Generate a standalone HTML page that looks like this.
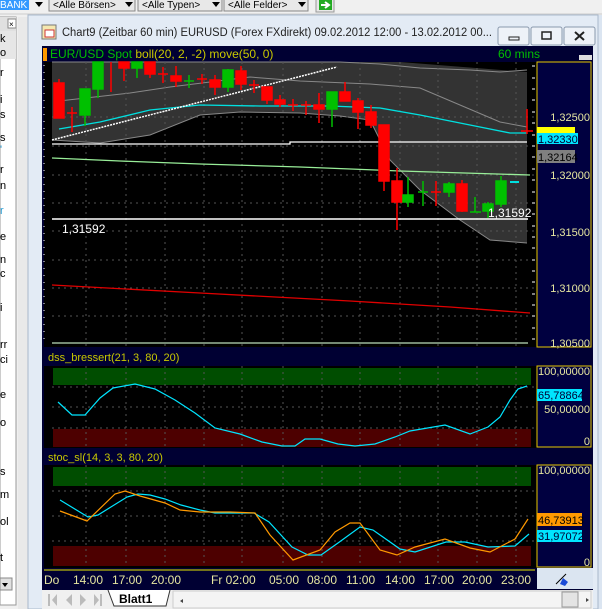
<!DOCTYPE html>
<html><head><meta charset="utf-8"><style>
html,body{margin:0;padding:0;width:602px;height:609px;overflow:hidden;background:#f0f0f0;font-family:"Liberation Sans",sans-serif}
svg{display:block}
text{font-family:"Liberation Sans",sans-serif}
</style></head><body>
<svg width="602" height="609" viewBox="0 0 602 609" xmlns="http://www.w3.org/2000/svg">
<rect x="0" y="0" width="602" height="15" fill="#f0f0f0"/>
<rect x="0" y="0" width="29" height="10" fill="#3399ff"/>
<text x="0" y="8" font-size="10" fill="#fff">BANK</text>
<path d="M35 2 L43 2 L39 7 Z" fill="#000"/>
<g font-size="10" fill="#000">
<rect x="49" y="-2" width="86" height="13" fill="#e8e8e8" stroke="#888"/><text x="53" y="8">&lt;Alle Börsen&gt;</text><path d="M125 2 L133 2 L129 7Z"/>
<rect x="138" y="-2" width="84" height="13" fill="#e8e8e8" stroke="#888"/><text x="142" y="8">&lt;Alle Typen&gt;</text><path d="M212 2 L220 2 L216 7Z"/>
<rect x="224" y="-2" width="84" height="13" fill="#e8e8e8" stroke="#888"/><text x="228" y="8">&lt;Alle Felder&gt;</text><path d="M298 2 L306 2 L302 7Z"/>
</g>
<rect x="316" y="-1" width="18" height="13" fill="#e8e8e8" stroke="#999"/>
<rect x="319" y="0" width="13" height="10" fill="#22aa22"/>
<path d="M321 5 H328 M325 2 L329 5 L325 8" stroke="#fff" stroke-width="2" fill="none"/>
<line x1="0" y1="14" x2="602" y2="14" stroke="#ccc"/>

<rect x="0" y="17" width="16" height="588" fill="#fff" stroke="#999"/>
<rect x="0" y="17" width="16" height="14" fill="#e0e0e0"/>
<rect x="8" y="19" width="8" height="9" fill="#fff" stroke="#888"/>
<text x="9" y="27" font-size="8">×</text>
<rect x="0" y="31" width="16" height="14" fill="#e6e6e6"/><text x="0" y="42" font-size="11">k</text>
<rect x="0" y="45" width="16" height="14" fill="#e6e6e6"/><text x="0" y="56" font-size="11">o</text>
<g font-size="11" fill="#000">
<text x="0" y="76">r</text><text x="0" y="103">i</text><text x="0" y="118">s</text><text x="0" y="141">s</text>
<text x="0" y="153" fill="#2a9fd6">'</text><text x="0" y="173">r</text><text x="0" y="189">n</text>
<text x="0" y="214" fill="#2a9fd6">r</text><text x="0" y="240">e</text><text x="0" y="263">n</text><text x="0" y="277">c</text>
<text x="0" y="311">i</text><text x="0" y="348">rr</text><text x="0" y="363">ci</text><text x="0" y="398">e</text><text x="0" y="426">o</text>
<text x="0" y="475">s</text><text x="0" y="498">m</text><text x="0" y="525">ol</text><text x="0" y="561">t</text>
</g>
<rect x="0" y="578" width="12" height="12" fill="#e0e0e0" stroke="#888"/><path d="M2 583 L8 583 L5 587Z" fill="#000"/>
<rect x="18" y="17" width="10" height="592" fill="#e9e9e9"/>
<rect x="28" y="15" width="574" height="594" fill="#dbe5f1"/>
<rect x="28" y="15" width="570" height="594" fill="#e3ebf5" stroke="#a9b8cc"/>
<rect x="42" y="25" width="14" height="14" fill="#f4e8b0" stroke="#777"/>
<rect x="45" y="30" width="9" height="7" fill="#fff" stroke="#c33"/>
<text x="62" y="36" font-size="11.5" fill="#222" textLength="430" lengthAdjust="spacingAndGlyphs">Chart9 (Zeitbar 60 min)  EURUSD (Forex FXdirekt) 09.02.2012 12:00 - 13.02.2012 00...</text>
<g fill="#eef2f8" stroke="#8a99ad">
<rect x="498" y="27" width="31" height="18" rx="2"/><rect x="531" y="27" width="31" height="18" rx="2"/><rect x="564" y="27" width="31" height="18" rx="2"/>
</g>
<rect x="509" y="37" width="10" height="3" fill="none" stroke="#222"/>
<rect x="542" y="32" width="9" height="7" fill="none" stroke="#222" stroke-width="1.5"/>
<path d="M575 32 L584 40 M584 32 L575 40" stroke="#222" stroke-width="2"/>

<rect x="42" y="46" width="551" height="544" fill="#000033"/>
<rect x="43" y="48" width="4" height="13" fill="#ff9900"/>
<text x="50" y="58" font-size="12" fill="#00c000">EUR/USD Spot <tspan fill="#c8c800">boll(20, 2, -2) move(50, 0)</tspan></text>
<text x="498" y="58" font-size="12" fill="#00c000">60 mins</text>
<rect x="579" y="55" width="13" height="5" fill="#ddd"/>

<rect x="44" y="62" width="493" height="285" fill="#000"/>
<path d="M52 62 L337 62 L400 62 L527 72 L527 243 L490 240 L460 220 L420 190 L390 160 L370 120 L340 116 L300 113 L240 112 L200 115 L150 135 L100 143 L52 140 Z" fill="#333333"/>
<polyline points="52,62 340,62 380,64 420,68 470,70 500,72 527,70" fill="none" stroke="#888"/>
<polyline points="59,101 130,93 170,87 250,77 300,81 370,84 420,88 460,105 500,122 527,127" fill="none" stroke="#888"/>
<polyline points="52,140 100,143 150,135 200,115 240,112 300,113 340,116 370,120 390,160 420,190 460,220 490,240 527,243" fill="none" stroke="#888"/>
<g stroke="#555" stroke-dasharray="2,4" fill="none">
<path d="M86 62V347M126 62V347M165 62V347M204 62V347M242 62V347M283 62V347M322 62V347M360 62V347M400 62V347M438 62V347M477 62V347M516 62V347"/>
<path d="M52 117H537M52 146H537M52 175H537M52 203H537M52 231H537M52 260H537M52 288H537M52 316H537"/>
</g>
<g stroke="#fff"><path d="M44 65v1M44 72v1M44 79v1M44 86v1M44 93v1M44 100v1M44 107v1M44 114v1M44 121v1M44 128v1M44 135v1M44 142v1M44 149v1M44 156v1M44 163v1M44 170v1M44 177v1M44 184v1M44 191v1M44 198v1M44 205v1M44 212v1M44 219v1M44 226v1M44 233v1M44 240v1M44 247v1M44 254v1M44 261v1M44 268v1M44 275v1M44 282v1M44 289v1M44 296v1M44 303v1M44 310v1M44 317v1M44 324v1M44 331v1M44 338v1" stroke-width="1"/></g>
<polyline points="59,129 100,122 150,110 200,105 260,106 330,106 380,108 420,115 470,125 510,133 527,133" fill="none" stroke="#00e0e0" stroke-width="1.3"/>
<path d="M52 144 H290 V142 H527" stroke="#fff" fill="none" stroke-width="1.3"/>
<path d="M52 140 L337 67" stroke="#fff" stroke-width="1.5" stroke-dasharray="2,1"/>
<path d="M52 158 L120 161 L200 164 L300 167 L400 171 L530 175" stroke="#99ee99" fill="none" stroke-width="1.3"/>
<path d="M52 219 H528" stroke="#fff" stroke-width="1.5"/>
<path d="M52 285 L200 293 L350 301 L450 307 L530 313" stroke="#e00000" fill="none" stroke-width="1.3"/>
<path d="M52 343 H528" stroke="#bbddbb" stroke-width="1.3"/>
<g stroke-width="1.5">
<g stroke="#ff0000" fill="#ff0000">
<path d="M59 79V118"/><rect x="54" y="83" width="10" height="35"/>
<path d="M72 107V132M67 113H77"/>
<path d="M111 62V92"/>
<path d="M124 62V81"/><rect x="119" y="62" width="10" height="6"/>
<path d="M150 62V78"/><rect x="145" y="62" width="10" height="12"/>
<path d="M163 67V83M158 74H168"/>
<path d="M176 66V87"/><rect x="171" y="76" width="10" height="5"/>
<path d="M202 74V84M197 79H207"/>
<path d="M215 75V95"/><rect x="210" y="80" width="10" height="7"/>
<path d="M241 66V90"/><rect x="236" y="71" width="10" height="13"/>
<path d="M254 80V93M249 85H259"/>
<path d="M267 87V104"/><rect x="262" y="87" width="10" height="13"/>
<path d="M280 95V107"/><rect x="275" y="100" width="10" height="4"/>
<path d="M293 99V111M288 105H298"/>
<path d="M306 101V115M301 105H311"/>
<path d="M319 93V123"/><rect x="314" y="105" width="10" height="4"/>
<path d="M345 82V101"/><rect x="340" y="92" width="10" height="9"/>
<path d="M358 98V129"/><rect x="353" y="101" width="10" height="11"/>
<path d="M371 105V128"/><rect x="366" y="112" width="10" height="13"/>
<path d="M384 125V191"/><rect x="379" y="125" width="10" height="56"/>
<path d="M397 168V230"/><rect x="392" y="181" width="10" height="21"/>
<path d="M436 181V206M431 192H441"/>
<path d="M462 180V212"/><rect x="457" y="184" width="10" height="27"/>
<path d="M527 109V134M521 131H533"/>
</g>
<g stroke="#00c000" fill="#00c000">
<path d="M85 89V126"/><rect x="80" y="89" width="10" height="26"/>
<path d="M98 62V98"/><rect x="93" y="62" width="10" height="27"/>
<path d="M137 62V78"/><rect x="132" y="62" width="10" height="6"/>
<path d="M189 75V88M184 81H194"/>
<path d="M228 69V92"/><rect x="223" y="70" width="10" height="17"/>
<path d="M332 92V127"/><rect x="327" y="92" width="10" height="17"/>
<path d="M408 177V207"/><rect x="403" y="195" width="10" height="7"/>
<path d="M423 181V206M418 192H428"/>
<path d="M449 182V197"/><rect x="444" y="184" width="10" height="8"/>
<path d="M475 197V212M470 212H481"/>
<path d="M488 202V218"/><rect x="483" y="204" width="10" height="7"/>
<path d="M501 176V207"/><rect x="496" y="181" width="10" height="23"/>
</g>
<path d="M510 182H519" stroke="#00e0e0" stroke-width="2"/>
</g>
<text x="62" y="233" font-size="12" fill="#fff">1,31592</text>
<text x="488" y="217" font-size="12" fill="#fff">1,31592</text>
<rect x="537" y="62" width="54" height="285" fill="#000040" stroke="#e6c800"/>
<g stroke="#fff"><path d="M532 66h3M532 78h3M532 89h3M532 100h3M532 112h3M532 123h3M532 135h3M532 146h3M532 157h3M532 169h3M532 180h3M532 192h3M532 203h3M532 214h3M532 226h3M532 237h3M532 248h3M532 260h3M532 271h3M532 282h3M532 294h3M532 305h3M532 316h3M532 328h3M532 339h3"/></g>
<g font-size="11" fill="#e6e6a0" text-anchor="end">
<text x="590" y="121">1,32500</text><text x="590" y="179">1,32000</text><text x="590" y="236">1,31500</text><text x="590" y="292">1,31000</text><text x="590" y="347">1,30500</text>
</g>
<rect x="537" y="127" width="38" height="7" fill="#ffff00"/>
<rect x="537" y="133" width="41" height="11" fill="#00e5ff"/>
<text x="538" y="143" font-size="11" fill="#000033">1,32330</text>
<rect x="537" y="150" width="38" height="13" fill="#808080"/>
<text x="538" y="161" font-size="11" fill="#000">1,32164</text>

<text x="48" y="361" font-size="11" fill="#c8c800">dss_bressert(21, 3, 80, 20)</text>
<rect x="44" y="366" width="493" height="82" fill="#000"/>
<rect x="53" y="368" width="478" height="17" fill="#004d00"/>
<rect x="53" y="429" width="478" height="18" fill="#4d0000"/>
<g stroke="#555" stroke-dasharray="2,4"><path d="M86 366V448M126 366V448M165 366V448M204 366V448M242 366V448M283 366V448M322 366V448M360 366V448M400 366V448M438 366V448M477 366V448M516 366V448M52 387H537M52 407H537M52 428H537"/></g>
<polyline points="58,402 72,415 85,415 100,398 113,388 135,384 155,389 175,400 195,413 215,428 240,434 262,442 282,446 295,446 305,439 320,439 338,444 355,446 375,444 395,437 410,431 445,425 470,434 488,427 500,417 510,400 518,389 527,386" fill="none" stroke="#00e5ff" stroke-width="1.2"/>
<rect x="537" y="366" width="54" height="81" fill="#000040" stroke="#e6c800"/>
<g font-size="11" fill="#e6e6a0" text-anchor="end"><text x="590" y="375">100,00000</text><text x="590" y="413">50,00000</text><text x="590" y="445">0</text></g>
<rect x="537" y="389" width="45" height="12" fill="#00e5ff"/>
<text x="538" y="399" font-size="11" fill="#000033">65,78864</text>

<text x="48" y="461" font-size="11" fill="#c8c800">stoc_sl(14, 3, 3, 80, 20)</text>
<rect x="44" y="465" width="493" height="103" fill="#000"/>
<rect x="53" y="467" width="478" height="19" fill="#004d00"/>
<rect x="53" y="546" width="478" height="20" fill="#4d0000"/>
<g stroke="#555" stroke-dasharray="2,4"><path d="M86 465V566M126 465V566M165 465V566M204 465V566M242 465V566M283 465V566M322 465V566M360 465V566M400 465V566M438 465V566M477 465V566M516 465V566M52 491H537M52 516H537M52 541H537"/></g>
<polyline points="60,500 88,517 98,515 127,497 138,494 150,495 165,499 181,505 200,510 215,513 254,513 269,522 292,547 308,555 321,555 338,543 360,527 373,530 400,549 415,552 446,542 465,542 488,547 515,546 529,534" fill="none" stroke="#00e5ff" stroke-width="1.2"/>
<polyline points="60,511 87,521 115,494 125,491 140,496 165,503 180,510 200,512 230,512 255,513 270,535 293,560 320,550 335,532 350,523 360,523 380,550 397,555 415,547 445,539 470,548 490,552 515,539 528,519" fill="none" stroke="#ff9900" stroke-width="1.2"/>
<rect x="537" y="465" width="54" height="102" fill="#000040" stroke="#e6c800"/>
<g font-size="11" fill="#e6e6a0" text-anchor="end"><text x="590" y="474">100,00000</text><text x="590" y="566">0</text></g>
<rect x="537" y="513" width="45" height="13" fill="#ff9900"/>
<text x="538" y="524" font-size="11" fill="#000">46,73913</text>
<rect x="537" y="530" width="45" height="12" fill="#00e5ff"/>
<text x="538" y="540" font-size="11" fill="#000033">31,97072</text>

<path d="M44 570H535" stroke="#e6e600"/>
<g font-size="12" fill="#e6e6a0">
<text x="44" y="584">Do</text><text x="73" y="584">14:00</text><text x="112" y="584">17:00</text><text x="151" y="584">20:00</text>
<text x="211" y="584">Fr 02:00</text><text x="269" y="584">05:00</text><text x="307" y="584">08:00</text><text x="346" y="584">11:00</text>
<text x="385" y="584">14:00</text><text x="424" y="584">17:00</text><text x="462" y="584">20:00</text><text x="501" y="584">23:00</text>
</g>
<rect x="537" y="568" width="56" height="21" fill="#dbe5f1"/>
<path d="M556 584 L566 574" stroke="#000"/><path d="M563 578 L568 582 L565 586 L560 584Z" fill="#1a4ad6"/>

<rect x="42" y="590" width="551" height="19" fill="#f0f0f0"/>
<g fill="#bbb"><path d="M48 594v12h2v-12zM52 600l5-6v12z"/><path d="M66 600l6-6v12z"/><path d="M80 594l6 6-6 6z"/><path d="M94 594l5 6-5 6zM100 594v12h2v-12z"/></g>
<path d="M108 590 L114 606 L166 606 L170 590" fill="#fff" stroke="#333"/>
<text x="119" y="603" font-size="12" font-weight="bold" fill="#000">Blatt1</text>
<rect x="173" y="591" width="418" height="17" fill="#f4f4f4" stroke="#ccc"/>
<path d="M183 599l-3 2 3 2z" fill="#444"/>
<rect x="562" y="592" width="16" height="15" fill="#e4e4e4" stroke="#999"/>
<path d="M586 598l3 2-3 2z" fill="#444"/>
</svg>
</body></html>
